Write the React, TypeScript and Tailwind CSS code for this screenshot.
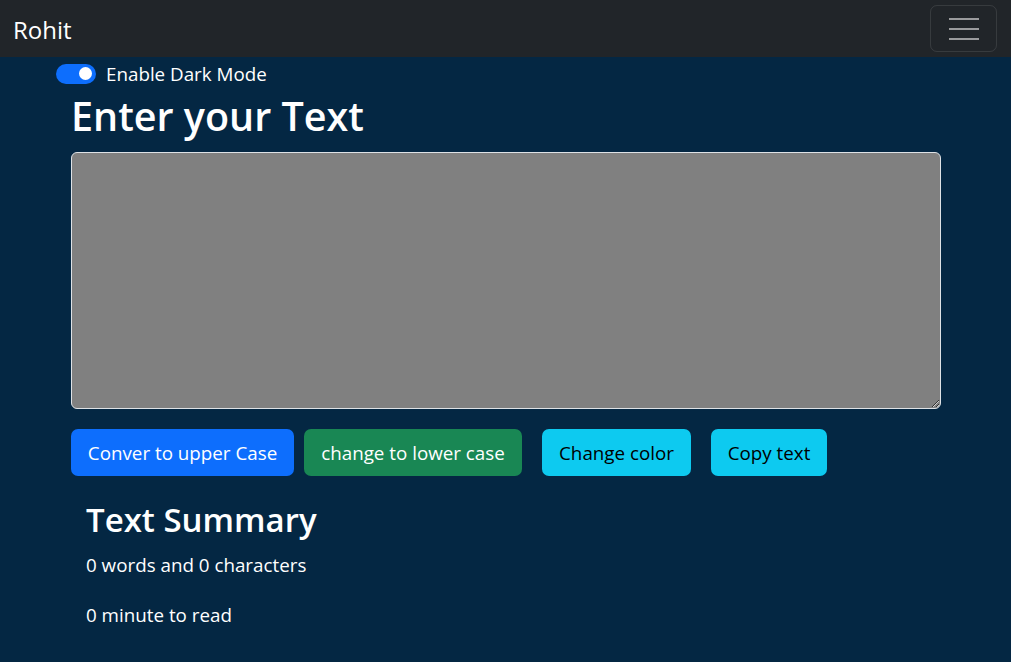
import React from "react";

const font = { fontFamily: '"Open Sans", "Noto Sans", sans-serif' };

export default function App() {
  return (
    <div className="min-h-[662px] bg-[#042743] text-white" style={font}>
      <nav className="h-[57px] bg-[#212529] flex items-center justify-between pl-[13px] pr-[14px]">
        <span className="mt-[2px] text-[24px] leading-none text-white">Rohit</span>
        <button className="w-[67px] h-[47px] rounded-[7px] border border-white/10 flex flex-col items-center justify-center gap-[8px]">
          <span className="block w-[30px] h-[2px] bg-[#9a9b9d]" />
          <span className="block w-[30px] h-[2px] bg-[#9a9b9d]" />
          <span className="block w-[30px] h-[2px] bg-[#9a9b9d]" />
        </button>
      </nav>

      <div className="mt-[2px] ml-[56px] h-[29px] flex items-center">
        <div className="w-[40px] h-[20px] rounded-full bg-[#0d6efd] flex items-center justify-end pr-[4px]">
          <span className="block w-[13px] h-[13px] rounded-full bg-white" />
        </div>
        <label className="ml-[10px] mt-[2px] text-[18.8px] leading-[28.8px]">Enable Dark Mode</label>
      </div>

      <div className="ml-[71px] w-[870px]">
        <h1 className="mt-[4px] text-[39.5px] leading-[48px] font-semibold">Enter your Text</h1>
        <textarea
          className="mt-[12px] block w-[870px] h-[257px] bg-[#808080] text-white border border-[#dee2e6] rounded-[6px] outline-none p-[8px]"
          defaultValue=""
        />
        <div className="mt-[20px] flex items-center h-[47px]">
          <button className="w-[223px] h-[47px] pt-[2px] rounded-[7px] bg-[#0d6efd] text-white text-[18.8px]">
            Conver to upper Case
          </button>
          <button className="ml-[10px] w-[218px] h-[47px] pt-[2px] rounded-[7px] bg-[#198754] text-white text-[18.8px]">
            change to lower case
          </button>
          <button className="ml-[20px] w-[149px] h-[47px] pt-[2px] rounded-[7px] bg-[#0dcaf0] text-black text-[18.8px]">
            Change color
          </button>
          <button className="ml-[20px] w-[116px] h-[47px] pt-[2px] rounded-[7px] bg-[#0dcaf0] text-black text-[18.8px]">
            Copy text
          </button>
        </div>
        <div className="pl-[15px] mt-[23px]">
          <h2 className="text-[33px] leading-[42px] font-semibold">Text Summary</h2>
          <p className="mt-[10px] text-[18.8px] leading-[28.8px]">0 words and 0 characters</p>
          <p className="mt-[21px] text-[18.8px] leading-[28.8px]">0 minute to read</p>
        </div>
      </div>
    </div>
  );
}
